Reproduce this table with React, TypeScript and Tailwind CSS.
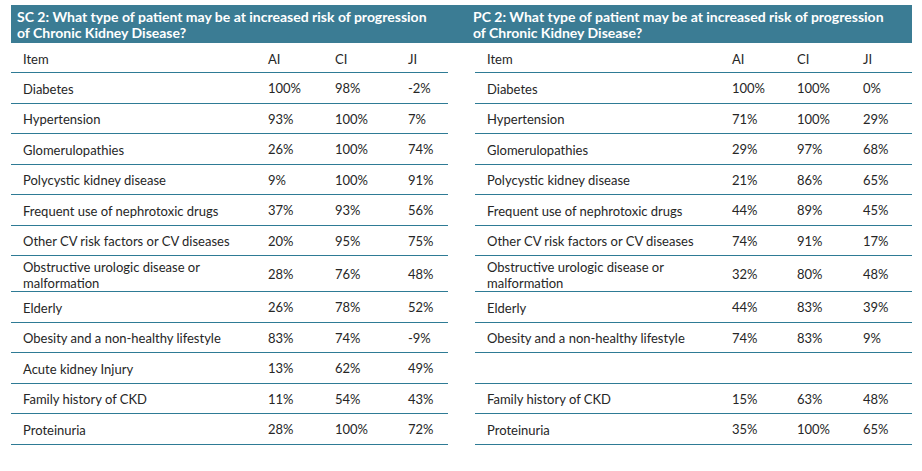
import React from 'react';

type Row = { item: string; ai: string; ci: string; ji: string; tall?: boolean };

const scRows: Row[] = [
  { item: 'Diabetes', ai: '100%', ci: '98%', ji: '-2%' },
  { item: 'Hypertension', ai: '93%', ci: '100%', ji: '7%' },
  { item: 'Glomerulopathies', ai: '26%', ci: '100%', ji: '74%' },
  { item: 'Polycystic kidney disease', ai: '9%', ci: '100%', ji: '91%' },
  { item: 'Frequent use of nephrotoxic drugs', ai: '37%', ci: '93%', ji: '56%' },
  { item: 'Other CV risk factors or CV diseases', ai: '20%', ci: '95%', ji: '75%' },
  { item: 'Obstructive urologic disease or\nmalformation', ai: '28%', ci: '76%', ji: '48%', tall: true },
  { item: 'Elderly', ai: '26%', ci: '78%', ji: '52%' },
  { item: 'Obesity and a non-healthy lifestyle', ai: '83%', ci: '74%', ji: '-9%' },
  { item: 'Acute kidney Injury', ai: '13%', ci: '62%', ji: '49%' },
  { item: 'Family history of CKD', ai: '11%', ci: '54%', ji: '43%' },
  { item: 'Proteinuria', ai: '28%', ci: '100%', ji: '72%' },
];

const pcRows: Row[] = [
  { item: 'Diabetes', ai: '100%', ci: '100%', ji: '0%' },
  { item: 'Hypertension', ai: '71%', ci: '100%', ji: '29%' },
  { item: 'Glomerulopathies', ai: '29%', ci: '97%', ji: '68%' },
  { item: 'Polycystic kidney disease', ai: '21%', ci: '86%', ji: '65%' },
  { item: 'Frequent use of nephrotoxic drugs', ai: '44%', ci: '89%', ji: '45%' },
  { item: 'Other CV risk factors or CV diseases', ai: '74%', ci: '91%', ji: '17%' },
  { item: 'Obstructive urologic disease or\nmalformation', ai: '32%', ci: '80%', ji: '48%', tall: true },
  { item: 'Elderly', ai: '44%', ci: '83%', ji: '39%' },
  { item: 'Obesity and a non-healthy lifestyle', ai: '74%', ci: '83%', ji: '9%' },
  { item: '', ai: '', ci: '', ji: '' },
  { item: 'Family history of CKD', ai: '15%', ci: '63%', ji: '48%' },
  { item: 'Proteinuria', ai: '35%', ci: '100%', ji: '65%' },
];

function Table({ title, rows, right }: { title: string; rows: Row[]; right?: boolean }) {
  const grid = right ? 'grid-cols-[245px_65px_66px_1fr]' : 'grid-cols-[245px_67px_73px_1fr]';
  return (
    <div className="flex flex-col">
      <div className="h-[38px] whitespace-pre-line bg-[#3b7c94] px-[6px] pt-[4px] text-[14px] font-bold leading-[16px] text-white">
        {title}
      </div>
      <div className={right ? 'ml-[8px] w-[437px]' : 'w-[437px]'}>
        <div className={grid + ' grid h-[30px] items-center border-b border-[#2e7b95] pl-[12px] pt-[5px]'}>
          <span>Item</span>
          <span>AI</span>
          <span>CI</span>
          <span>JI</span>
        </div>
        {rows.map((r, i) => (
          <div
            key={i}
            className={
              grid +
              ' grid items-center border-b border-[#2e7b95] pl-[12px] pt-[2px] ' +
              (r.tall ? 'h-[36px]' : 'h-[30.5px]')
            }
          >
            <span className="whitespace-pre-line leading-[16px]">{r.item}</span>
            <span>{r.ai}</span>
            <span>{r.ci}</span>
            <span>{r.ji}</span>
          </div>
        ))}
      </div>
    </div>
  );
}

export default function App() {
  return (
    <div className="h-[471px] w-[922px] bg-white pt-[5px] pl-[11px] text-[13px] text-[#262626] font-['Lato','Liberation_Sans',sans-serif]">
      <div className="flex">
        <div className="w-[456px]">
          <Table
            title={'SC 2: What type of patient may be at increased risk of progression\nof Chronic Kidney Disease?'}
            rows={scRows}
          />
        </div>
        <div className="w-[445px]">
          <Table
            title={'PC 2: What type of patient may be at increased risk of progression\nof Chronic Kidney Disease?'}
            rows={pcRows}
            right
          />
        </div>
      </div>
    </div>
  );
}
